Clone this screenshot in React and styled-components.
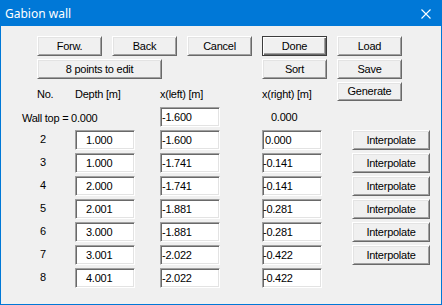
import React from 'react'
import styled, { createGlobalStyle } from 'styled-components'

const GlobalStyle = createGlobalStyle`
  html, body { margin: 0; padding: 0; background: #f0f0f0; }
  body {
    font-family: "Liberation Sans", Arial, sans-serif;
    font-size: 11px;
    letter-spacing: -0.25px;
    color: #000;
  }
`

const rows = [
  { no: 2, depth: '1.000', left: '-1.600', right: '0.000', interp: true },
  { no: 3, depth: '1.000', left: '-1.741', right: '-0.141', interp: true },
  { no: 4, depth: '2.000', left: '-1.741', right: '-0.141', interp: true },
  { no: 5, depth: '2.001', left: '-1.881', right: '-0.281', interp: true },
  { no: 6, depth: '3.000', left: '-1.881', right: '-0.281', interp: true },
  { no: 7, depth: '3.001', left: '-2.022', right: '-0.422', interp: true },
  { no: 8, depth: '4.001', left: '-2.022', right: '-0.422', interp: false },
]

const CloseIcon = () => (
  <svg width="10" height="10" viewBox="0 0 10 10">
    <path d="M0.5 0.5 L9.5 9.5 M9.5 0.5 L0.5 9.5" stroke="#fff" strokeWidth="1.1" fill="none" />
  </svg>
)

const App = () => {
  // positive values sit a little further in, like the original's leading blank
  const pad = (v, base) => (v.startsWith('-') ? base : base + 2)

  return (
    <Window>
      <GlobalStyle />
      <TitleBar>
        <Title>Gabion wall</Title>
        <CloseButton><CloseIcon /></CloseButton>
      </TitleBar>
      <Body>
        <ButtonGrid>
          <Button>Forw.</Button>
          <Button>Back</Button>
          <Button>Cancel</Button>
          <Button $default>Done</Button>
          <Button>Load</Button>
        </ButtonGrid>
        <ButtonGrid>
          <Button $span={2} $width={125}>8 points to edit</Button>
          <Button $col={4}>Sort</Button>
          <Button>Save</Button>
        </ButtonGrid>
        <HeaderRow>
          <HeadLabel $pad={15}>No.</HeadLabel>
          <HeadLabel>Depth [m]</HeadLabel>
          <HeadLabel>x(left) [m]</HeadLabel>
          <HeadLabel>x(right) [m]</HeadLabel>
          <Button $height={19}>Generate</Button>
        </HeaderRow>
        <Table>
          <WallTop>Wall top = 0.000</WallTop>
          <Field $pad={3}>-1.600</Field>
          <PlainValue>0.000</PlainValue>
          <span />
          {rows.map((r) => (
            <React.Fragment key={r.no}>
              <RowNo>{r.no}</RowNo>
              <Field $pad={12}>{r.depth}</Field>
              <Field $pad={pad(r.left, 3)}>{r.left}</Field>
              <Field $pad={pad(r.right, 2)}>{r.right}</Field>
              {r.interp ? <Button $width={78}>Interpolate</Button> : <span />}
            </React.Fragment>
          ))}
        </Table>
      </Body>
    </Window>
  )
}

export default App

const Window = styled.div`
  width: 442px;
  height: 305px;
  box-sizing: border-box;
  border: 1px solid #0078d7;
  border-top: none;
  background: #f0f0f0;
  display: flex;
  flex-direction: column;
`
const TitleBar = styled.div`
  height: 26px;
  margin: 0 -1px;
  background: #0078d7;
  display: flex;
  align-items: center;
  justify-content: space-between;
  padding: 0 11px 0 5px;
  flex-shrink: 0;
`
const Title = styled.span`
  font-family: "Noto Sans", "Open Sans", sans-serif;
  font-size: 12px;
  letter-spacing: 0;
  color: #fff;
`
const CloseButton = styled.span`
  display: flex;
  width: 10px;
  height: 10px;
  margin-top: 1px;
`
const Body = styled.div`
  flex: 1;
  padding: 10px 0 0 21px;
  display: flex;
  flex-direction: column;
  gap: 3px;
`
const ButtonGrid = styled.div`
  display: grid;
  grid-template-columns: repeat(5, 65px);
  column-gap: 10px;
  margin-left: 15px;
`
const Button = styled.button`
  box-sizing: border-box;
  width: ${(p) => (p.$width ? `${p.$width}px` : '100%')};
  height: ${(p) => p.$height || 20}px;
  ${(p) => (p.$span ? `grid-column: span ${p.$span};` : '')}
  ${(p) => (p.$col ? `grid-column-start: ${p.$col};` : '')}
  justify-self: start;
  align-self: center;
  padding: 0;
  margin: 0;
  font-family: "Liberation Sans", Arial, sans-serif;
  font-size: 11px;
  letter-spacing: -0.25px;
  color: #000;
  background: #f0f0f0;
  border: 1px solid;
  border-color: ${(p) => (p.$default ? '#3c3c3c' : '#ffffff #696969 #696969 #ffffff')};
  box-shadow: ${(p) =>
    p.$default
      ? 'inset 1px 1px #ffffff, inset -1px -1px #696969, inset -2px -2px #a0a0a0'
      : 'inset 1px 1px #e3e3e3, inset -1px -1px #a0a0a0'};
  line-height: 1;
`
const HeaderRow = styled.div`
  display: grid;
  grid-template-columns: 53px 85px 102px 75px 65px;
  align-items: center;
  margin-bottom: 3px;
`
const HeadLabel = styled.span`
  padding-left: ${(p) => p.$pad || 0}px;
  padding-top: 4px;
`
const Table = styled.div`
  display: grid;
  grid-template-columns: 53px 85px 102px 90px 78px;
  grid-auto-rows: 20px;
  row-gap: 3px;
  align-items: center;
`
const WallTop = styled.span`
  grid-column: span 2;
  padding-top: 1px;
`
const RowNo = styled.span`
  width: 42px;
  text-align: center;
  margin-top: -3px;
`
const PlainValue = styled.span`
  padding-left: 9px;
`
const Field = styled.div`
  box-sizing: border-box;
  width: 60px;
  height: 20px;
  display: flex;
  align-items: center;
  padding-left: ${(p) => p.$pad - 2}px;
  background: #fff;
  border: 1px solid;
  border-color: #a0a0a0 #ffffff #ffffff #a0a0a0;
  box-shadow: inset 1px 1px #696969, inset -1px -1px #e3e3e3;
`
